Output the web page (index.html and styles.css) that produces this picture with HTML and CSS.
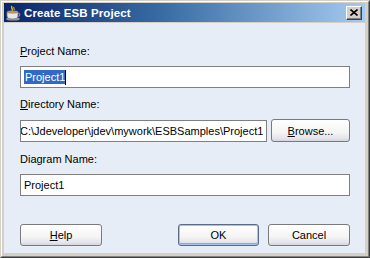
FILE: index.html
```html
<!DOCTYPE html>
<html>
<head>
    <title>Create ESB Project</title>
    <link rel="stylesheet" href="styles.css">
</head>
<body>
    <div class="window">
        <div class="frame">
            <div class="titlebar">
                <svg class="app-icon" width="16" height="16" viewBox="0 0 16 16">
                    <path d="M7 1 C5 3 9 4 7 6" fill="none" stroke="#e8b400" stroke-width="1.5"/>
                    <path d="M9 2 C8 3 10 4 9 5" fill="none" stroke="#f5d020" stroke-width="1"/>
                    <ellipse cx="8" cy="14" rx="7" ry="1.6" fill="#9a9a9a"/>
                    <path d="M2 7 H13 V11 C13 13 11 14 7.5 14 C4 14 2 13 2 11 Z" fill="#e8e8e8" stroke="#7a7a7a" stroke-width="0.8"/>
                    <ellipse cx="7.5" cy="7" rx="5.5" ry="1.2" fill="#c8a060" stroke="#7a7a7a" stroke-width="0.6"/>
                    <path d="M13 8 C15.5 8 15.5 11.5 12.5 11.5" fill="none" stroke="#8a8a8a" stroke-width="1.2"/>
                </svg>
                <span class="title">Create ESB Project</span>
                <div class="close-btn">
                    <svg width="8" height="7" viewBox="0 0 8 7">
                        <path d="M0.5 0.5 L7.5 6.5 M7.5 0.5 L0.5 6.5" stroke="#000" stroke-width="1.6"/>
                    </svg>
                </div>
            </div>

            <div class="content">
                <div class="label first"><u>P</u>roject Name:</div>
                <div class="field"><span class="selected">Project1</span><span class="caret"></span></div>

                <div class="label"><u>D</u>irectory Name:</div>
                <div class="row">
                    <div class="field grow"><span class="scrolled">C:\Jdeveloper\jdev\mywork\ESBSamples\Project1</span></div>
                    <div class="button browse"><u>B</u>rowse...</div>
                </div>

                <div class="label">Diagram Name:</div>
                <div class="field">Project1</div>

                <div class="buttons">
                    <div class="button help"><u>H</u>elp</div>
                    <div class="spacer"></div>
                    <div class="button default">OK</div>
                    <div class="button">Cancel</div>
                </div>
            </div>
        </div>
    </div>
</body>
</html>
```

FILE: styles.css
```css
body {
    margin: 0;
    background: #d4d0c8;
    font-family: "Liberation Sans", Arial, sans-serif;
    font-size: 11px;
    color: #000;
}
.window {
    width: 370px;
    height: 258px;
    box-sizing: border-box;
    border: 1px solid;
    border-color: #d4d0c8 #404040 #404040 #d4d0c8;
}
.frame {
    height: 100%;
    box-sizing: border-box;
    border: 1px solid;
    border-color: #ffffff #808080 #808080 #ffffff;
    padding: 1px 3px 3px 2px;
    display: flex;
    flex-direction: column;
    background: #d4d0c8;
}
.titlebar {
    height: 19px;
    flex: none;
    display: flex;
    align-items: center;
    padding: 0 2px 0 1px;
    background: linear-gradient(to right, #0a246a 0%, #3a6ea5 45%, #a6caf0 100%);
}
.app-icon {
    flex: none;
    margin-right: 3px;
}
.title {
    color: #fff;
    font-weight: bold;
    font-size: 11.5px;
    letter-spacing: 0.1px;
    flex: 1;
}
.close-btn {
    width: 16px;
    height: 14px;
    box-sizing: border-box;
    background: #d4d0c8;
    border: 1px solid;
    border-color: #ffffff #404040 #404040 #ffffff;
    box-shadow: inset -1px -1px 0 #808080;
    display: flex;
    align-items: center;
    justify-content: center;
    margin-right: 1px;
}
.content {
    flex: 1;
    margin-top: 1px;
    background: #e7edf6;
    padding: 22px 15px 0 16px;
    display: flex;
    flex-direction: column;
}
.label {
    line-height: 13px;
    margin-top: 10px;
}
.label.first {
    margin-top: 0;
}
.field {
    height: 22px;
    box-sizing: border-box;
    margin-top: 8px;
    border: 1px solid #7f7f7f;
    background: #fff;
    padding: 0 3px;
    line-height: 20px;
    white-space: nowrap;
    overflow: hidden;
    display: flex;
    align-items: center;
}
.selected {
    background: #316ac5;
    color: #fff;
    line-height: 14px;
    padding: 0 0 0 1px;
}
.caret {
    width: 1px;
    height: 15px;
    background: #000;
}
.scrolled {
    margin-left: -4px;
}
.row {
    display: flex;
    gap: 4px;
    margin-top: 8px;
    align-items: center;
}
.row .field {
    margin-top: 0;
}
.grow {
    flex: 1;
}
.row + .label {
    margin-top: 11px;
}
.button {
    height: 22px;
    box-sizing: border-box;
    border: 1px solid #7a7a7a;
    border-radius: 3px;
    background: linear-gradient(to bottom, #ffffff 0%, #f4f4f4 60%, #e2e2ea 90%, #d4d4dc 100%);
    display: flex;
    align-items: center;
    justify-content: center;
}
.browse {
    width: 79px;
    height: 23px;
    flex: none;
}
.buttons {
    display: flex;
    gap: 9px;
    margin-top: 28px;
}
.buttons .button {
    width: 82px;
}
.spacer {
    flex: 1;
}
.buttons .button.default {
    width: 81px;
    border-color: #5a6a8a;
    box-shadow: inset 0 0 0 1px #a9c2ec, inset 0 -1px 0 1px #89a8e0;
}
```
